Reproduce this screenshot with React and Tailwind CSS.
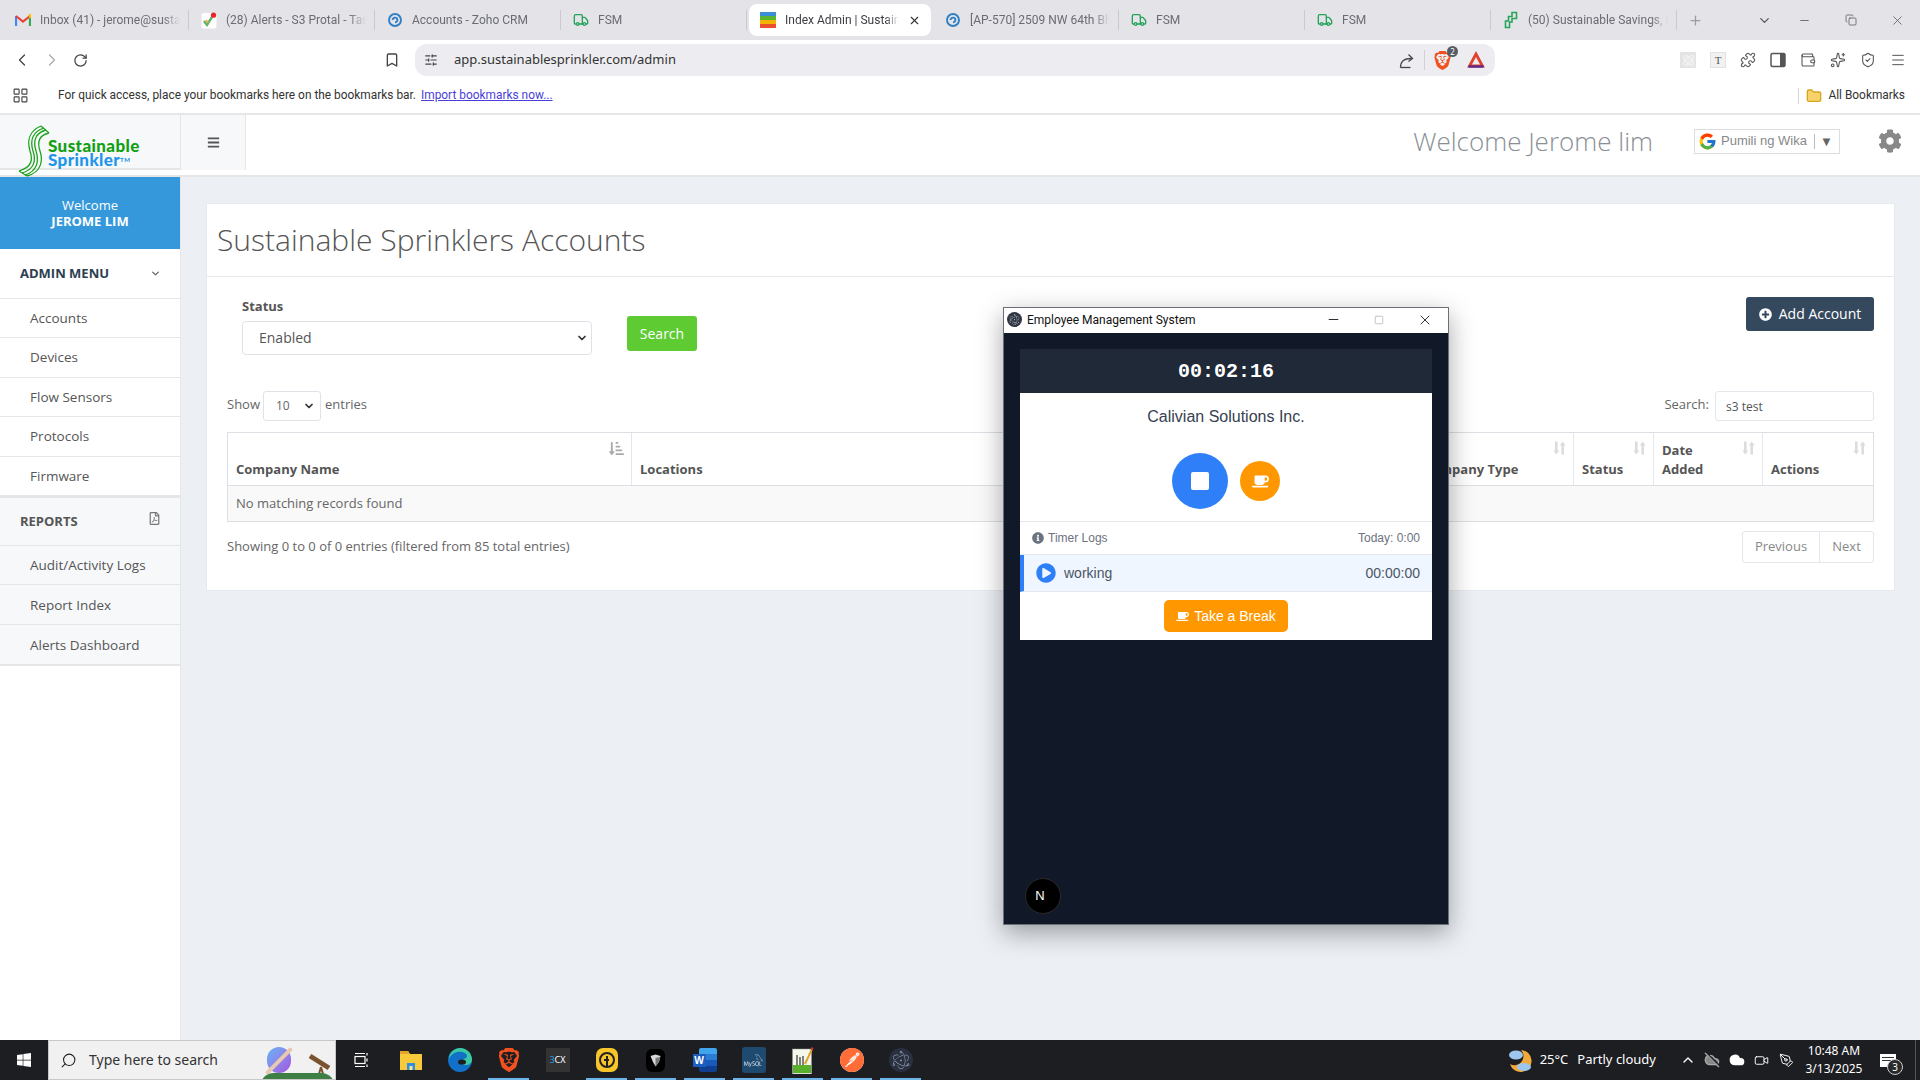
import React from 'react';
import {
  ChevronDown, ChevronLeft, ChevronRight, ChevronUp, Copy, Minus, Plus, RotateCw, Search, Square, X, Bookmark,
  SlidersHorizontal, Puzzle, Wallet, Sparkles, ShieldCheck, Menu, LayoutGrid, Truck, Folder, Atom, CloudOff, Cloud, Video, PenTool,
} from 'lucide-react';
import {
  FaBars, FaCog, FaCoffee, FaInfoCircle, FaPlayCircle, FaPlusCircle, FaRegFilePdf, FaSortAmountDownAlt, FaWindows,
} from 'react-icons/fa';
import { FcGoogle } from 'react-icons/fc';
import { SiBrave, SiElectron, SiMysql, SiPostman } from 'react-icons/si';

const pageFont = "font-['Open_Sans','Noto_Sans',sans-serif]";
const chromeFont = "font-['Roboto',sans-serif]";
const notoFont = "font-['Noto_Sans',sans-serif]";

function GmailIcon() {
  return (
    <svg width="16" height="13" viewBox="0 0 16 13" fill="none">
      <path d="M1 12V2" stroke="#4285f4" strokeWidth="2.2" />
      <path d="M15 12V2" stroke="#34a853" strokeWidth="2.2" />
      <path d="M1 2 L8 7.5 L15 2" stroke="#ea4335" strokeWidth="2.2" />
      <path d="M13.6 1.6 L15 1 L15 4" stroke="#fbbc04" strokeWidth="2" />
    </svg>
  );
}

function ZohoIcon() {
  return (
    <svg width="16" height="16" viewBox="0 0 16 16" fill="none" stroke="#2f7fc4" strokeWidth="1.9">
      <circle cx="8" cy="8" r="6" />
      <path d="M5.6 8a2.4 2.4 0 1 1 2.4 2.4" />
    </svg>
  );
}

function ColorBars() {
  return (
    <div className="w-4 h-4 flex flex-col">
      <div className="flex-1 bg-[#3b8fd8]" />
      <div className="flex-1 bg-[#5cb531]" />
      <div className="flex-1 bg-[#f4b400]" />
      <div className="flex-1 bg-[#ea4f30]" />
    </div>
  );
}

function TaskIcon() {
  return (
    <svg width="16" height="17" viewBox="0 0 16 17">
      <rect x="0.5" y="1" width="15" height="15.5" rx="2.5" fill="#fff" />
      <path d="M3 9 L6 13 L11 5" fill="none" stroke="#59b56a" strokeWidth="2.4" />
      <path d="M5 8 L7.5 11" stroke="#f2a43a" strokeWidth="1.6" />
      <circle cx="12.5" cy="3.2" r="2.6" fill="#e9242a" />
    </svg>
  );
}

function SavingsIcon() {
  return (
    <svg width="16" height="18" viewBox="0 0 16 18" fill="none" stroke="#27a35a" strokeWidth="1.6">
      <path d="M9 1.5h4.5v6H9V11H6.5v5.5h-4V10h3V5.5H9z" />
    </svg>
  );
}

const fsmIcon = <Truck size={16} className="text-[#25a35a]" />;

const tabs = [
  { title: 'Inbox (41) - jerome@sustainable', icon: <GmailIcon /> },
  { title: '(28) Alerts - S3 Protal - Tasks', icon: <TaskIcon /> },
  { title: 'Accounts - Zoho CRM', icon: <ZohoIcon /> },
  { title: 'FSM', icon: fsmIcon },
  { title: 'Index Admin | Sustainable', icon: <ColorBars />, active: true },
  { title: '[AP-570] 2509 NW 64th Blvd', icon: <ZohoIcon /> },
  { title: 'FSM', icon: fsmIcon },
  { title: 'FSM', icon: fsmIcon },
  { title: '(50) Sustainable Savings, LLC', icon: <SavingsIcon /> },
];

function TabBar() {
  return (
    <div className={`h-10 bg-[#e3e3e8] flex items-center pl-[3px] ${chromeFont}`}>
      {tabs.map((tab, i) => (
        <div
          key={i}
          className={
            tab.active
              ? 'w-[182px] h-8 mx-[2px] bg-white rounded-lg flex items-center pl-[11px] pr-[10px] gap-[9px]'
              : 'w-[186px] h-5 border-r border-[#c9c9ce] flex items-center pl-[12px] pr-2 gap-[9px]'
          }
        >
          <div className="w-4 flex justify-center shrink-0">{tab.icon}</div>
          <span
            className={`flex-1 overflow-hidden whitespace-nowrap text-xs [mask-image:linear-gradient(to_right,black_88%,transparent)] ${
              tab.active ? 'text-[#3c3c43]' : 'text-[#6b6b73]'
            }`}
          >
            {tab.title}
          </span>
          {tab.active && <X size={13} className="shrink-0 text-[#333]" />}
        </div>
      ))}
      <Plus size={15} className="ml-[11px] text-[#9a9aa2]" />
      <div className="ml-auto flex items-center pr-[15px] text-[#55555c]">
        <ChevronDown size={15} />
        <Minus size={13} strokeWidth={1.5} className="ml-[26px]" />
        <Copy size={12} strokeWidth={1.5} className="ml-[34px]" />
        <X size={15} strokeWidth={1.25} className="ml-[33px]" />
      </div>
    </div>
  );
}

function ShareIcon() {
  return (
    <svg width="17" height="17" viewBox="0 0 17 17" fill="none" stroke="#444" strokeWidth="1.3">
      <path d="M1.5 15.5h10" />
      <path d="M1.5 15.5c0-6 3-9 11-9" />
      <path d="M9.5 2.5l4 4-4 3" />
    </svg>
  );
}

function Toolbar() {
  return (
    <div className={`h-10 bg-white flex items-center ${notoFont}`}>
      <div className="flex items-center gap-[10px] pl-[12px] text-[#444]">
        <ChevronLeft size={20} strokeWidth={1.5} />
        <ChevronRight size={20} strokeWidth={1.5} className="text-[#aaa]" />
        <RotateCw size={15} className="ml-[1px]" />
      </div>
      <Bookmark size={16} className="ml-[296px] text-[#444]" />
      <div className="ml-[15px] w-[1080px] h-8 rounded-xl bg-[#ededf1] flex items-center pl-[9px] pr-[10px]">
        <SlidersHorizontal size={14} className="text-[#444]" />
        <span className="ml-[16px] text-[13px] text-[#333]">app.sustainablesprinkler.com/admin</span>
        <div className="ml-auto">
          <ShareIcon />
        </div>
        <div className="w-px h-5 bg-[#d0d0d5] mx-[8px]" />
        <div className="relative">
          <SiBrave size={19} className="text-[#f1501f]" />
          <span className="absolute -top-[5px] -right-[6px] w-[11px] h-[11px] rounded-full bg-[#555b66] text-white text-[8px] leading-[11px] text-center">2</span>
        </div>
        <svg className="ml-[15px]" width="18" height="18" viewBox="0 0 18 18" fill="none">
          <path d="M9 3 L15.5 15 L2.5 15 Z" stroke="#e0412a" strokeWidth="2.8" />
          <path d="M1.5 15.5 L16.5 15.5" stroke="#5b2a8c" strokeWidth="2.4" />
        </svg>
      </div>
      <div className="ml-auto flex items-center gap-[14px] pr-[14px] text-[#555]">
        <div className="w-4 h-4 bg-[#e4e4e4] flex items-center justify-center">
          <Atom size={13} className="text-[#f4f4f4]" />
        </div>
        <span className="w-4 h-4 bg-[#f2f2f2] border border-[#e2e2e2] text-[11px] leading-[14px] text-center font-['Liberation_Serif',serif]">T</span>
        <Puzzle size={16} strokeWidth={1.6} />
        <svg width="16" height="16" viewBox="0 0 16 16">
          <rect x="1" y="1.5" width="14" height="13" rx="1.5" fill="none" stroke="#555" strokeWidth="1.5" />
          <rect x="10" y="1.5" width="5" height="13" fill="#555" />
        </svg>
        <Wallet size={16} strokeWidth={1.6} />
        <Sparkles size={16} strokeWidth={1.6} />
        <ShieldCheck size={16} strokeWidth={1.6} />
        <Menu size={16} strokeWidth={1.5} />
      </div>
    </div>
  );
}

function BookmarksBar() {
  return (
    <div className={`h-[35px] pb-[2px] bg-white border-b-2 border-[#e6e6e6] flex items-center text-[11.9px] text-[#333] ${chromeFont}`}>
      <LayoutGrid size={17} strokeWidth={1.6} className="ml-[12px] text-[#444]" />
      <span className="ml-[29px]">For quick access, place your bookmarks here on the bookmarks bar.</span>
      <a className="ml-[5px] underline text-[#4a3fd8]">Import bookmarks now...</a>
      <div className="ml-auto w-px h-4 bg-[#d5d5d5]" />
      <Folder size={16} className="ml-[7px] text-[#d9a520] fill-[#f8d36b]" />
      <span className="ml-[6px] pr-[15px]">All Bookmarks</span>
    </div>
  );
}

function SprinklerLogo() {
  return (
    <div className="relative w-[180px] h-[55px] bg-[#f7f8fa] border-b-2 border-[#e6e6e6]">
      <svg className="absolute left-[18px] top-[10px]" width="34" height="52" viewBox="0 0 34 52" fill="none" stroke="#1da31d" strokeWidth="1.3">
        <path d="M1 46 C14 42 15 35 12 26 C9 16 11 6 23 1" />
        <path d="M4 48 C17 44 18 35 15 26 C12 16 14 7 26 3" />
        <path d="M7 50 C20 46 21 35 18 26 C15 16 17 8 28 5" />
        <path d="M9 51 C24 47 25 35 22 26 C19 17 21 10 31 8" />
        <path d="M1 46 L9 51 M23 1 L31 8" />
      </svg>
      <div className="absolute left-[48px] top-[24px] font-['Lato',sans-serif] font-black text-[17px] leading-[14px] tracking-[0.4px]">
        <div className="text-[#12a012]">Sustainable</div>
        <div className="text-[#2196e8]">
          Sprinkler<span className="text-[6px] align-top">TM</span>
        </div>
      </div>
    </div>
  );
}

function PageHeader() {
  return (
    <div className={`h-[62px] bg-white border-b-2 border-[#e6e6e6] flex items-start ${pageFont}`}>
      <SprinklerLogo />
      <div className="w-[66px] h-[55px] bg-[#f7f8fa] border-l border-r border-[#e6e6e6] flex items-center justify-center">
        <FaBars size={13} className="text-[#555]" />
      </div>
      <div className="ml-auto h-full flex items-center pb-[8px]">
        <span className="text-[26px] font-light text-[#8a8f94]">Welcome Jerome lim</span>
        <div className="ml-[41px] w-[146px] h-[25px] border border-[#ddd] flex items-center pl-[3px] text-[13px] text-[#888] font-['Liberation_Sans',sans-serif]">
          <FcGoogle size={19} />
          <span className="ml-[4px] whitespace-nowrap">Pumili ng Wika</span>
          <span className="ml-[7px] h-[15px] border-l border-[#bbb] pl-[5px] leading-[15px] text-[#666]">▼</span>
        </div>
        <FaCog size={24} className="ml-[38px] mr-[18px] text-[#888]" />
      </div>
    </div>
  );
}

const adminLinks = ['Accounts', 'Devices', 'Flow Sensors', 'Protocols', 'Firmware'];
const reportLinks = ['Audit/Activity Logs', 'Report Index', 'Alerts Dashboard'];

function Sidebar() {
  return (
    <div className="w-[181px] shrink-0 bg-white border-r border-[#e6e6e6] text-[13px]">
      <div className="h-[72px] bg-[#3498db] text-white text-center flex flex-col justify-center leading-4 pb-[1px]">
        <div>Welcome</div>
        <div className="font-bold">JEROME LIM</div>
      </div>
      <div className="h-[50px] border-b border-[#e6e6e6] flex items-center justify-between pl-5 pr-[19px] text-[#2c3e50] font-bold">
        <span>ADMIN MENU</span>
        <ChevronDown size={11} strokeWidth={3} className="text-[#666]" />
      </div>
      {adminLinks.map((name) => (
        <div key={name} className="h-[39.4px] border-b border-[#e6e6e6] flex items-center pl-[30px] text-[13.5px] text-[#555]">
          {name}
        </div>
      ))}
      <div className="bg-[#f7f8fa] border-t-2 border-b-2 border-[#e6e6e6]">
        <div className="h-[48px] border-b border-[#e6e6e6] flex items-center justify-between pl-5 pr-[19px] text-[#555] font-bold">
          <span>REPORTS</span>
          <FaRegFilePdf size={13} className="text-[#777] -mt-[5px]" />
        </div>
        {reportLinks.map((name, i) => (
          <div key={name} className={`h-[39.5px] flex items-center pl-[30px] text-[13.5px] text-[#555] ${i < 2 ? 'border-b border-[#e6e6e6]' : ''}`}>
            {name}
          </div>
        ))}
      </div>
    </div>
  );
}

function SortArrows({ active }) {
  if (active) return <FaSortAmountDownAlt size={15} className="text-[#aaa]" />;
  return (
    <svg width="13" height="14" viewBox="0 0 13 14" fill="#dcdcdc">
      <path d="M2 0.5h2.6v9H6.3L3.3 13.5 0.3 9.5H2z" />
      <path d="M8.4 13.5V4.5H6.7L9.7 0.5l3 4H11v9z" />
    </svg>
  );
}

const columns = [
  { name: 'Company Name', width: 'w-[403px]', active: true },
  { name: 'Locations', width: 'flex-1' },
  { name: 'Company Type', width: 'w-[159px]' },
  { name: 'Status', width: 'w-[80px]' },
  { name: 'Date Added', width: 'w-[109px]' },
  { name: 'Actions', width: 'w-[111px]' },
];

function AccountsCard() {
  return (
    <div className="bg-white border border-[#e6e9ee] h-[388px] text-[13px] text-[#666]">
      <div className="h-[73px] pb-[2px] border-b border-[#e6e9ee] flex items-center pl-[10px]">
        <h1 className="text-[30px] font-light text-[#555]">Sustainable Sprinklers Accounts</h1>
      </div>
      <div className="px-[20px]">
        <div className="flex items-start pl-[15px] h-[114px]">
          <div className="pt-[20px]">
            <div className="font-bold text-[13px] text-[#555] leading-[18px]">Status</div>
            <div className="mt-[6px] w-[350px] h-[34px] border border-[#dfe3e8] rounded-[4px] flex items-center justify-between pl-[16px] pr-[3px] text-sm text-[#555]">
              <span>Enabled</span>
              <ChevronDown size={12} strokeWidth={3.5} className="text-[#333]" />
            </div>
          </div>
          <button className="ml-[35px] mt-[39px] w-[70px] h-[35px] rounded-[3px] bg-[#5ecb33] text-white text-sm">Search</button>
          <button className="ml-auto mt-[20px] w-[128px] h-[34px] rounded-[3px] bg-[#34495e] text-white text-sm flex items-center justify-center gap-[7px]">
            <FaPlusCircle size={13} />
            Add Account
          </button>
        </div>
        <div className="h-[41px] flex items-start justify-between">
          <div className="flex items-center">
            <span className="-mt-[3px]">Show</span>
            <div className="ml-[3px] w-[58px] h-[30px] border border-[#dfe3e8] rounded-[3px] flex items-center justify-between pl-[12px] pr-[5px] text-xs">
              <span>10</span>
              <ChevronDown size={12} strokeWidth={3.5} className="text-[#333]" />
            </div>
            <span className="ml-[4px] -mt-[3px]">entries</span>
          </div>
          <div className="flex items-center gap-[6px]">
            <span className="-mt-[3px]">Search:</span>
            <div className="w-[159px] h-[30px] border border-[#e3e6ea] rounded-[3px] flex items-center pl-[10px] pt-[1px] text-xs text-[#555]">s3 test</div>
          </div>
        </div>
        <div className="border border-[#dcdfe3]">
          <div className="flex h-[53px] border-b border-[#dcdfe3]">
            {columns.map((col, i) => (
              <div key={col.name} className={`${col.width} relative flex items-end px-[8px] pb-[6px] font-bold text-[#555] leading-[19px] ${i > 0 ? 'border-l border-[#e3e6ea]' : ''}`}>
                <span className={col.name === 'Date Added' ? 'w-[50px]' : ''}>{col.name}</span>
                <div className="absolute right-[7px] top-[8px]">
                  <SortArrows active={col.active} />
                </div>
              </div>
            ))}
          </div>
          <div className="h-[35px] bg-[#f9f9f9] flex items-center pl-[8px] text-[#666]">No matching records found</div>
        </div>
        <div className="flex items-start justify-between mt-[9px]">
          <span className="mt-[6px]">Showing 0 to 0 of 0 entries (filtered from 85 total entries)</span>
          <div className="flex h-[32px] border border-[#e3e6ea] rounded-[3px] text-[#888]">
            <div className="w-[77px] flex items-center justify-center border-r border-[#e3e6ea]">Previous</div>
            <div className="w-[53px] flex items-center justify-center">Next</div>
          </div>
        </div>
      </div>
    </div>
  );
}

function EmployeeWindow() {
  return (
    <div className="absolute left-[1003px] top-[307px] z-10 w-[446px] h-[618px] border border-[#6b7078] bg-[#111827] shadow-[0_8px_24px_rgba(0,0,0,0.35)] flex flex-col">
      <div className="h-[25px] pb-[2px] bg-white flex items-center pl-[3px] font-['Roboto',sans-serif] text-xs text-[#111]">
        <SiElectron size={15} className="text-white bg-[#2f3542] rounded-full p-[2px]" />
        <span className="ml-[5px]">Employee Management System</span>
        <div className="ml-auto flex items-center gap-[33px] pr-[15px]">
          <Minus size={15} strokeWidth={1.5} className="text-[#222]" />
          <Square size={10} className="text-[#bbb]" />
          <X size={16} strokeWidth={1.4} className="text-[#222]" />
        </div>
      </div>
      <div className="flex-1 relative px-[16px] pt-[16px] font-['Liberation_Sans',sans-serif]">
        <div className="h-[44px] bg-[#1f2937] text-white text-center font-['Liberation_Mono',monospace] font-semibold text-[20px] leading-[46px]">00:02:16</div>
        <div className="bg-white h-[247px]">
          <div className="pt-[12px] text-center text-base leading-6 text-[#374151]">Calivian Solutions Inc.</div>
          <div className="mt-[24px] flex items-center justify-center gap-[12px] h-[56px]">
            <div className="w-14 h-14 rounded-full bg-[#2f80f8] flex items-center justify-center">
              <div className="w-[18px] h-[18px] bg-white rounded-[2px]" />
            </div>
            <div className="w-10 h-10 rounded-full bg-[#ff9800] flex items-center justify-center">
              <FaCoffee size={17} className="text-white" />
            </div>
          </div>
          <div className="mt-[12px] h-[34px] border-t border-b border-[#e5e7eb] flex items-center justify-between px-[12px] text-xs text-[#6b7280]">
            <span className="flex items-center gap-[4px]">
              <FaInfoCircle size={12} />
              Timer Logs
            </span>
            <span>Today: 0:00</span>
          </div>
          <div className="h-[37px] bg-[#eff6ff] border-l-4 border-[#2f80f8] border-b border-b-[#e5e7eb] flex items-center justify-between pl-[12px] pr-[12px] text-sm text-[#4b5563]">
            <span className="flex items-center gap-[8px]">
              <FaPlayCircle size={20} className="text-[#2f80f8]" />
              working
            </span>
            <span>00:00:00</span>
          </div>
          <div className="flex justify-center pt-[8px]">
            <button className="w-[124px] h-8 rounded-[5px] bg-[#ff9800] text-white text-sm flex items-center justify-center gap-[5px]">
              <FaCoffee size={13} />
              Take a Break
            </button>
          </div>
        </div>
        <div className="absolute left-[21px] bottom-[10px] w-9 h-9 rounded-full bg-black border border-[#2a2a2a] flex items-center justify-center pr-[6px] text-white text-[13px] font-light">N</div>
      </div>
    </div>
  );
}

function TaskSlot({ children, open }) {
  return (
    <div className="relative w-[49px] h-10 flex items-center justify-center">
      {children}
      {open && <div className="absolute left-[4px] right-[4px] bottom-0 h-[2px] bg-[#6db4e8]" />}
    </div>
  );
}

function TaskbarApps() {
  return (
    <div className="flex items-center ml-[1px]">
      <TaskSlot>
        <svg width="16" height="16" viewBox="0 0 16 16" fill="none" stroke="#fff" strokeWidth="1.2">
          <rect x="1" y="4.5" width="10" height="7" />
          <path d="M1 1.5h10M1 14.5h10M13 1v2.5M13 6.5v3M13 12.5V15" />
        </svg>
      </TaskSlot>
      <TaskSlot>
        <svg width="24" height="22" viewBox="0 0 24 22">
          <path d="M1 2h8l2 3h12v16H1z" fill="#f8c93a" />
          <path d="M1 2h8l2 3H1z" fill="#e0a52a" />
          <rect x="8" y="14" width="8" height="7" fill="#2f8fdc" />
          <rect x="10.5" y="17" width="3" height="4" fill="#f8e5a0" />
        </svg>
      </TaskSlot>
      <TaskSlot>
        <svg width="24" height="24" viewBox="0 0 24 24">
          <circle cx="12" cy="12" r="12" fill="#1170c8" />
          <path d="M12 0a12 12 0 0 1 12 12c0 3-3 5-6 5-3 0-5-1-5-3 0-4 6-2 6-6 0-3-5-5-10-4C5 5 2 8 1 11 1 5 6 0 12 0z" fill="#3cc9a0" />
          <ellipse cx="14" cy="14" rx="4" ry="2.6" fill="#1c1e22" />
        </svg>
      </TaskSlot>
      <TaskSlot open>
        <SiBrave size={24} className="text-[#f1501f]" />
      </TaskSlot>
      <TaskSlot>
        <div className="w-6 h-6 bg-[#333] text-[9px] leading-6 text-center text-white">
          <span className="text-[#2c9be0]">3</span>CX
        </div>
      </TaskSlot>
      <TaskSlot open>
        <svg width="24" height="26" viewBox="0 0 24 26" fill="none">
          <rect x="1" y="1" width="22" height="24" rx="7" fill="#f8c52a" />
          <circle cx="12" cy="13" r="7" stroke="#222" strokeWidth="2" />
          <path d="M12 9v10M9 13h5" stroke="#222" strokeWidth="2" />
        </svg>
      </TaskSlot>
      <TaskSlot open>
        <div className="w-[19px] h-[23px] rounded-md bg-black flex items-center justify-center">
          <svg width="11" height="13" viewBox="0 0 11 13">
            <path d="M0.5 2 L5.5 0.5 L10.5 2 L9 8 L5.5 12.5 L3 8 Z" fill="#d8d8d8" />
            <path d="M5.5 4 L10 3 L9 8 L5.5 12.5 Z" fill="#777" />
          </svg>
        </div>
      </TaskSlot>
      <TaskSlot open>
        <div className="relative w-6 h-6">
          <div className="absolute right-0 top-0 w-[18px] h-6 flex flex-col rounded-[2px] overflow-hidden">
            <div className="flex-1 bg-[#41a5ee]" />
            <div className="flex-1 bg-[#2b7cd3]" />
            <div className="flex-1 bg-[#185abd]" />
            <div className="flex-1 bg-[#103f91]" />
          </div>
          <div className="absolute left-0 top-[6px] w-[13px] h-[13px] bg-[#1b5ebe] text-[10px] leading-[13px] font-bold text-center text-white">W</div>
        </div>
      </TaskSlot>
      <TaskSlot open>
        <div className="w-6 h-[26px] rounded-[3px] bg-[#1d4a6e] flex items-center justify-center">
          <SiMysql size={19} className="text-[#cfdde8]" />
        </div>
      </TaskSlot>
      <TaskSlot open>
        <svg width="22" height="27" viewBox="0 0 22 27" fill="none">
          <rect x="0.5" y="2" width="19" height="25" fill="#f3f7ec" stroke="#999" strokeWidth="0.5" />
          <rect x="1" y="18" width="18" height="8" fill="#59b02c" />
          <path d="M5 8v10M8 10v8M11 9v9" stroke="#333" strokeWidth="1.2" />
          <path d="M13 17 L20 2" stroke="#e0a52a" strokeWidth="2" />
          <path d="M19.5 3 L20.7 0.5" stroke="#c0392b" strokeWidth="2" />
        </svg>
      </TaskSlot>
      <TaskSlot open>
        <div className="w-6 h-6 rounded-full bg-white flex items-center justify-center">
          <SiPostman size={24} className="text-[#ff6c37]" />
        </div>
      </TaskSlot>
      <TaskSlot open>
        <div className="w-6 h-6 rounded-full bg-[#2b3040] flex items-center justify-center">
          <SiElectron size={18} className="text-[#a8bccb]" />
        </div>
      </TaskSlot>
    </div>
  );
}

function Taskbar() {
  return (
    <div className={`h-10 bg-[#1c1e22] flex items-center text-white ${notoFont}`}>
      <div className="w-12 flex justify-center">
        <FaWindows size={16} />
      </div>
      <div className="w-[288px] h-10 bg-[#f1f1f1] border border-[#c8c8c8] flex items-center pl-[11px] text-sm text-[#333] relative overflow-hidden">
        <Search size={17} strokeWidth={1.5} className="text-[#222] -scale-x-100" />
        <span className="ml-[12px]">Type here to search</span>
        <div className="absolute left-[218px] top-[6px] w-[24px] h-[26px] rounded-full bg-gradient-to-br from-[#59b4f5] to-[#a050e0]" />
        <div className="absolute left-[212px] top-[18px] w-[36px] h-[4px] rounded-full bg-[#e8c8b0] -rotate-45" />
        <svg className="absolute left-[258px] top-[12px]" width="26" height="28" viewBox="0 0 26 28" fill="none">
          <path d="M3 3 L22 15" stroke="#7a5230" strokeWidth="5" />
          <path d="M14 14 L10 28 M14 14 L18 28" stroke="#7a5230" strokeWidth="2" />
        </svg>
        <div className="absolute right-0 -bottom-[8px] w-[75px] h-[14px] rounded-t-full bg-[#3e7f45]" />
      </div>
      <TaskbarApps />
      <div className="ml-auto flex items-center h-full">
        <svg width="26" height="26" viewBox="0 0 26 26">
          <path d="M14 3a11 11 0 1 1-11 14 9 9 0 0 0 11-14z" fill="#f2a93b" />
          <ellipse cx="9" cy="8" rx="7" ry="4.5" fill="#9cc6ee" />
          <ellipse cx="17" cy="20" rx="7" ry="4" fill="#9cc6ee" />
        </svg>
        <span className="ml-[7px] text-[13px]">25°C</span>
        <span className="ml-[9px] text-[13px]">Partly cloudy</span>
        <ChevronUp size={16} className="ml-[24px]" />
        <div className="flex items-center gap-[9px] ml-[8px]">
          <CloudOff size={16} className="text-[#aaa] fill-[#888]" />
          <Cloud size={16} className="text-white fill-white" />
          <Video size={15} strokeWidth={1.5} />
          <PenTool size={15} strokeWidth={1.5} className="ml-[1px]" />
        </div>
        <div className="ml-[9px] w-[62px] text-xs text-center leading-[18px]">
          <div>10:48 AM</div>
          <div>3/13/2025</div>
        </div>
        <div className="relative ml-[15px] w-[16px] h-[13px] bg-white flex flex-col gap-[2px] pt-[3px] px-[2px]">
          <div className="h-px bg-[#333]" />
          <div className="h-px bg-[#333]" />
          <span className="absolute left-[7px] top-[5px] w-[16px] h-[16px] rounded-full border border-[#ccc] bg-[#2a2a2a] text-white text-[10px] leading-[14px] text-center">3</span>
        </div>
        <div className="ml-[19px] mr-[4px] w-px h-full bg-[#555]" />
      </div>
    </div>
  );
}

export default function App() {
  return (
    <div className="relative w-[1920px] h-[1080px] overflow-hidden flex flex-col bg-[#ecf0f5]">
      <TabBar />
      <Toolbar />
      <BookmarksBar />
      <PageHeader />
      <div className={`flex-1 flex min-h-0 ${pageFont}`}>
        <Sidebar />
        <div className="flex-1 pl-[25px] pr-[25px] pt-[26px]">
          <AccountsCard />
        </div>
      </div>
      <EmployeeWindow />
      <Taskbar />
    </div>
  );
}
